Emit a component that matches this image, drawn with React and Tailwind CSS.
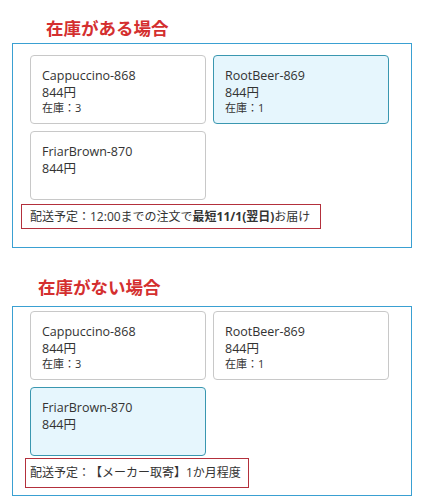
import React from "react";

const items = [
  { name: "Cappuccino-868", price: "844円", stock: 3 },
  { name: "RootBeer-869", price: "844円", stock: 1 },
  { name: "FriarBrown-870", price: "844円", stock: null },
];

function Card({ item, active }) {
  return (
    <div
      className={
        "h-[69px] w-[176px] rounded-[4px] border px-[11px] pt-[10px] text-[#333] " +
        (active ? "border-[#3a97b0] bg-[#e6f6fd]" : "border-[#c8c8c8] bg-white")
      }
    >
      <div className="text-[12.5px] leading-[19px]">{item.name}</div>
      <div className="text-[12.5px] leading-[15px]">{item.price}</div>
      {item.stock !== null && (
        <div className="mt-[1px] text-[11px] leading-[13px]">在庫：{item.stock}</div>
      )}
    </div>
  );
}

export default function App() {
  const font = { fontFamily: '"Open Sans", "Noto Sans CJK JP", sans-serif' };
  return (
    <div className="w-[422px] h-[502px] bg-white [text-spacing-trim:space-all]" style={font}>
      {/* in stock */}
      <div className="pt-[15px] pl-[46px] text-[17.5px] font-bold leading-[26px] text-[#d42f2f]">
        在庫がある場合
      </div>
      <div className="ml-[12px] mt-[2px] h-[205px] w-[400px] border-[1.5px] border-[#3aa0d2] pl-[17px] pt-[11px]">
        <div className="grid grid-cols-[176px_176px] gap-x-[7px] gap-y-[7px]">
          <Card item={items[0]} active={false} />
          <Card item={items[1]} active />
          <Card item={items[2]} active={false} />
        </div>
        <div className="-ml-[9px] mt-[4px] flex h-[25px] w-[300px] items-center whitespace-nowrap border border-[#b3303c] pl-[8px] text-[12px] text-[#333]">
          配送予定：12:00までの注文で<span className="font-bold">最短11/1(翌日)</span>お届け
        </div>
      </div>

      {/* out of stock */}
      <div className="pt-[26px] pl-[38px] text-[17.5px] font-bold leading-[26px] text-[#d42f2f]">
        在庫がない場合
      </div>
      <div className="ml-[12px] mt-[6px] h-[190px] w-[400px] border-[1.5px] border-[#3aa0d2] pl-[17px] pt-[4px]">
        <div className="grid grid-cols-[176px_176px] gap-x-[7px] gap-y-[7px]">
          <Card item={items[0]} active={false} />
          <Card item={items[1]} active={false} />
          <Card item={items[2]} active />
        </div>
        <div className="-ml-[5px] mt-[2px] flex h-[30px] w-[224px] items-center whitespace-nowrap border border-[#b3303c] pl-[4px] text-[12px] text-[#333]">
          配送予定：【メーカー取寄】1か月程度
        </div>
      </div>
    </div>
  );
}
